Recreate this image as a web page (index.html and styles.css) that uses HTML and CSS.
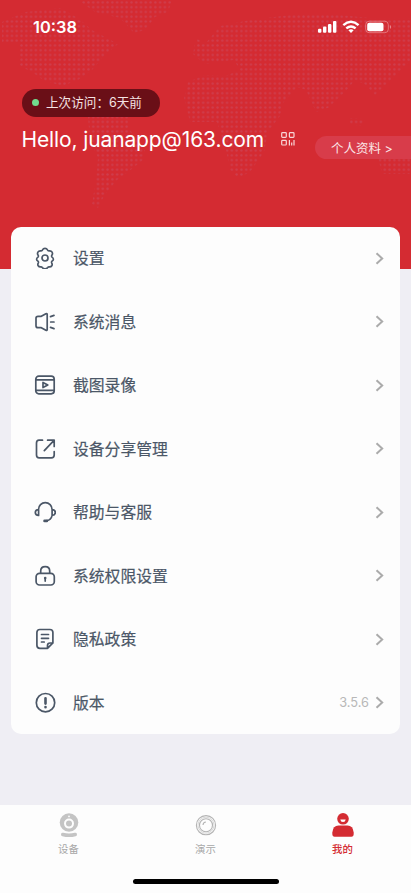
FILE: index.html
```html
<!DOCTYPE html>
<html lang="zh-CN">
<head>
<meta charset="utf-8">
<meta name="viewport" content="width=device-width, initial-scale=1">
<title>我的</title>
<link rel="stylesheet" href="styles.css">
</head>
<body>
<div class="app">
  <header class="hero">
    <svg class="map" viewBox="0 0 411 268" aria-hidden="true">
      <defs><pattern id="dots" width="4.78" height="4.78" patternUnits="userSpaceOnUse"><circle cx="2.4" cy="2.4" r="1.2" fill="#c95c78"/></pattern></defs>
      <g fill="url(#dots)">
        <path d="M2 22L25 12 60 8 78 18 92 30 118 44 105 55 92 70 78 80 62 86 43 80 32 72 20 66 20 44 2 42Z"/>
        <path d="M78 0H172L168 12 155 17 145 30 134 33 120 18 95 12Z"/>
        <path d="M88 117H128L130 130 145 150 143 160 128 172 117 180 104 196 98 208 92 204 96 180 98 158 90 140Z"/>
        <path d="M196 38L205 44 220 26 250 20 290 15 330 14 370 18 411 18V60L396 75 375 95 366 85 355 80 345 92 328 108 316 112 306 90 297 87 283 103 280 116 268 132 264 152 250 172 238 178 230 170 226 150 217 122H190L184 98 188 82 205 75 225 76 240 70 234 60 205 64 193 54Z"/>
        <path d="M348 118L366 119 360 126 350 124Z"/>
        <path d="M378 157L390 145 411 140V174H382Z"/>
      </g>
    </svg>
    <div class="statusbar">
      <span class="time">10:38</span>
      <svg class="status-icons" viewBox="0 0 74 14" fill="#fff" aria-hidden="true">
        <rect x="0" y="8.7" width="3.4" height="4" rx="1"/><rect x="5" y="6.6" width="3.4" height="6.1" rx="1"/><rect x="10" y="4" width="3.4" height="8.7" rx="1"/><rect x="15" y="1" width="3.4" height="11.7" rx="1"/>
        <g fill="none" stroke="#fff" stroke-width="2.4"><path d="M25.3 5.2Q33-1.5 40.6 5.2"/><path d="M28.3 8.4Q33 4.6 37.6 8.4"/></g><path d="M30.4 10.2Q33 8.3 35.6 10.2L33 13Z"/>
        <rect x="47.7" y="1.2" width="22.6" height="11.5" rx="3.5" fill="none" stroke="#e9868c" stroke-width=".8"/><rect x="49.2" y="2.7" width="16.3" height="8.5" rx="2"/><path d="M72 5q2.4 2 0 4z" fill="#e9868c"/>
      </svg>
    </div>
    <div class="visit"><i class="online"></i><span>上次访问：6天前</span></div>
    <div class="account">
      <h1>Hello, juanapp@163.com</h1>
      <svg class="qr" viewBox="0 0 14 14" fill="none" stroke="#f8d5d6" stroke-width="1.2" aria-hidden="true"><rect x=".7" y=".7" width="4.6" height="4.6" rx=".8"/><rect x="8.4" y=".7" width="4.6" height="4.6" rx=".8"/><rect x=".7" y="8.4" width="4.6" height="4.6" rx=".8"/><path d="M8.4 8v5.5M10.7 10.5v3M13 8v5.5"/></svg>
      <a class="profile">个人资料 &gt;</a>
    </div>
  </header>

  <main class="menu">
    <a class="row"><svg class="icon" viewBox="0 0 22 22"><path d="M8.300 3.200Q9.300 1.300 11 1.300t2.700 1.900q.5.700 1.400.7 2.100-.3 3 1.200t-.3 3.200q-.4.800 0 1.600 1.600 1.100 1.600 2.300 0 1.200-1.500 2.100-.6.700-.2 1.500.9 1.700.1 3t-2.700 1.100q-.9 0-1.400.7-1 1.300-2.700 1.300t-2.700-1.300q-.5-.7-1.400-.7-1.900.2-2.700-1.100t.1-3q.4-.8-.2-1.500Q2.600 13.400 2.600 12.200q0-1.200 1.600-2.300.4-.8 0-1.600-1.200-1.700-.3-3.200t3-1.200q.9 0 1.400-.7Z"/><circle cx="11" cy="11" r="3"/></svg><span class="label">设置</span><svg class="chevron" viewBox="0 0 9 13"><path d="M1.5 1.200 7.200 6.500 1.500 11.800"/></svg></a>
    <a class="row"><svg class="icon" viewBox="0 0 22 22"><path d="M13.200 3.500v15q0 1.300-1.300.8L7.300 16.700H4Q2 16.700 2 14.700V7.300q0-2 2-2h3.300l4.600-2.600q1.300-.5 1.300.8ZM16.500 5.600l3.500-1.200M16.700 11H20M16.500 16.400l3.500 1.200"/></svg><span class="label">系统消息</span><svg class="chevron" viewBox="0 0 9 13"><path d="M1.5 1.200 7.200 6.500 1.500 11.800"/></svg></a>
    <a class="row"><svg class="icon" viewBox="0 0 22 22"><rect x="1.800" y="2.200" width="18.400" height="17.600" rx="3"/><path d="M2 5.900h18M2 16.400h18M9 8.400v5.200l4.800-2.600Z"/></svg><span class="label">截图录像</span><svg class="chevron" viewBox="0 0 9 13"><path d="M1.5 1.200 7.200 6.500 1.500 11.800"/></svg></a>
    <a class="row"><svg class="icon" viewBox="0 0 22 22"><path d="M8.500 2.200H5Q2.500 2.200 2.500 5v12q0 2.800 2.700 2.800h12.200q2.800 0 2.800-2.800v-3.500M13.600 2.200h6.600v6.300M20 2.400 10.300 12.700"/></svg><span class="label">设备分享管理</span><svg class="chevron" viewBox="0 0 9 13"><path d="M1.5 1.200 7.200 6.500 1.500 11.800"/></svg></a>
    <a class="row"><svg class="icon" viewBox="0 0 22 22"><path d="M4.500 8.500a6.800 6.800 0 0 1 13.600 0v6.100q-1.200 4.600-5.300 5M4.600 8.700v5.800Q1.300 14.400 1.300 11.600T4.600 8.700ZM18.100 8.700v5.800q3.200-.1 3.200-2.900t-3.200-2.900Z"/><path d="M10.600 19.900h2.200" stroke-width="2.800"/></svg><span class="label">帮助与客服</span><svg class="chevron" viewBox="0 0 9 13"><path d="M1.5 1.200 7.200 6.500 1.500 11.800"/></svg></a>
    <a class="row"><svg class="icon" viewBox="0 0 22 22"><rect x="2.100" y="8.300" width="18.200" height="11.700" rx="3.500"/><path d="M6.700 8.200V6q0-4.400 4.500-4.400T15.700 6v2.200M11.200 13.500v2.600"/><circle cx="11.200" cy="13.100" r="1.300" class="solid"/></svg><span class="label">系统权限设置</span><svg class="chevron" viewBox="0 0 9 13"><path d="M1.5 1.200 7.200 6.500 1.500 11.800"/></svg></a>
    <a class="row"><svg class="icon" viewBox="0 0 22 22"><path d="M13.500 20.300H5.900q-3 0-3-3V4.500q0-3 3-3h10q3 0 3 3v10.300l-5.400 5.500v-2.800q0-2.500 2.500-2.500h2.900M7.500 6.500h7M7.500 10.300h7M7.500 14h2.700"/></svg><span class="label">隐私政策</span><svg class="chevron" viewBox="0 0 9 13"><path d="M1.5 1.200 7.200 6.500 1.500 11.800"/></svg></a>
    <a class="row"><svg class="icon" viewBox="0 0 22 22"><circle cx="11.500" cy="10.700" r="9.200"/><path d="M11.500 6.200v5.400M11.500 15.100v.1" stroke-width="2.600"/></svg><span class="label">版本</span><span class="version">3.5.6</span><svg class="chevron" viewBox="0 0 9 13"><path d="M1.5 1.200 7.200 6.500 1.500 11.800"/></svg></a>
  </main>

  <footer class="tabs">
    <nav class="tablist">
      <a class="tab"><svg class="tab-icon" viewBox="0 0 24 26"><circle cx="12" cy="9.500" r="9.300" fill="#c4c4c4"/><circle cx="12" cy="10.600" r="4" fill="none" stroke="#fdfdfd" stroke-width="2"/><circle cx="12" cy="3.400" r=".9" fill="#fdfdfd"/><path d="M5.800 21.500q6.200 1.600 12.400 0" fill="none" stroke="#c4c4c4" stroke-width="3.600" stroke-linecap="round"/></svg><span>设备</span></a>
      <a class="tab"><svg class="tab-icon" viewBox="0 0 24 26" fill="none" stroke="#b4b4b4" stroke-width="1.100"><circle cx="12" cy="12.200" r="9.600"/><circle cx="12" cy="12.200" r="6.500"/><path d="M9 12q.2-2.800 2.900-3"/><circle cx="12" cy="12.200" r="8" stroke-width=".5"/></svg><span>演示</span></a>
      <a class="tab active"><svg class="tab-icon" viewBox="0 0 24 26" fill="#d42b32"><circle cx="12" cy="5.800" r="5.800"/><path d="M9.300 6.500h5.400q-.3 2.500-2.700 2.500T9.300 6.500Z" fill="#fff"/><path d="M1.300 19.500Q2 12.500 7.500 12.500h9q5.500 0 6.200 7 .4 4.200-2.400 4.200H3.700q-2.800 0-2.400-4.200Z"/></svg><span>我的</span></a>
    </nav>
    <div class="home-indicator"></div>
  </footer>
</div>
</body>
</html>
```
FILE: styles.css
```css
* { box-sizing: border-box; }
body { margin: 0; background: #efeef4; font-family: Inter, "Noto Sans CJK SC", sans-serif; }
.app { display: flex; flex-direction: column; width: 100%; height: 893px; overflow: hidden; }
.hero { position: relative; flex: none; height: 269px; background: #d42b32; color: #fff; }
.map { position: absolute; inset: 0; width: 411px; height: 268px; opacity: .38; }
.statusbar { position: relative; display: flex; justify-content: space-between; align-items: center; height: 54px; padding: 0 19px 0 33px; }
.time { font-size: 16.4px; font-weight: 600; line-height: 20px; }
.status-icons { width: 74px; height: 14px; }
.visit { position: relative; display: flex; align-items: center; width: 138px; height: 28px; margin: 34.5px 0 0 21.5px; padding-left: 10px; border-radius: 14px; background: #6a0f17; color: #f5e3e4; font-size: 12.6px; line-height: 28px; white-space: nowrap; }
.visit span { padding-top: 1px; }
.online { flex: none; width: 7px; height: 7px; margin-right: 7.5px; border-radius: 50%; background: #71dd8e; }
.account { position: relative; display: flex; align-items: center; height: 44px; padding-left: 21.5px; }
h1 { width: 242px; margin: 2px 0 0; font-size: 21px; font-weight: 400; line-height: 28px; letter-spacing: -.12px; white-space: nowrap; }
.qr { flex: none; width: 14px; height: 14px; margin-left: 17px; }
.profile { flex: 1; align-self: flex-start; height: 23px; margin: 19.5px 0 0 20px; padding: 1px 0 0 16.5px; border-radius: 12px 0 0 12px; background: #d83c4a; color: #fbe5e6; font-size: 12.5px; line-height: 23px; white-space: nowrap; }
.menu { position: relative; flex: none; height: 507.5px; margin: -42.5px 11px 0; border-radius: 10px; background: #fdfdfd; }
.row { display: flex; align-items: center; height: 63.5px; padding: 0 16px 0 23px; color: #4b5767; }
.icon { width: 22px; height: 22px; margin-right: 17px; fill: none; stroke: #4b5767; stroke-width: 1.7; stroke-linecap: round; stroke-linejoin: round; }
.icon .solid { fill: #4b5767; stroke: none; }
.label { flex: 1; padding-top: 2px; font-size: 15.8px; line-height: 22px; -webkit-text-stroke: .2px currentColor; }
.version { margin-right: 6px; color: #b8b8b8; font-size: 12.8px; }
.chevron { width: 9px; height: 13px; fill: none; stroke: #ababab; stroke-width: 2; }
.tabs { display: flex; flex-direction: column; align-items: center; height: 88px; margin-top: auto; background: #fdfdfd; }
.tablist { display: flex; width: 100%; height: 74px; padding-top: 8px; }
.tab { display: flex; flex: 1; flex-direction: column; align-items: center; color: #a7a7a7; font-size: 10.4px; line-height: 16px; }
.tab-icon { width: 24px; height: 26px; margin-bottom: 3px; }
.active { color: #d42b32; font-weight: 500; }
.home-indicator { width: 146px; height: 5px; border-radius: 3px; background: #000; }
```
